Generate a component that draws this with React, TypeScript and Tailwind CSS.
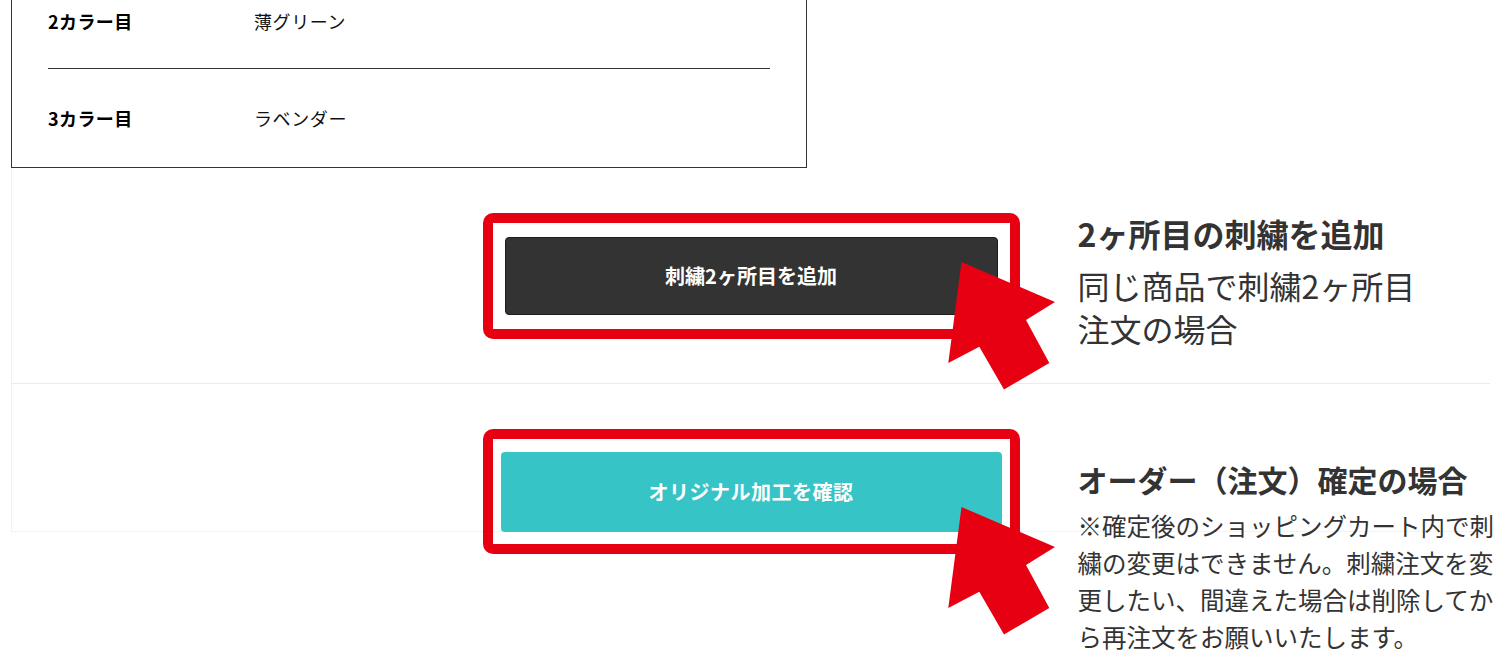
const jp = "font-['Noto_Sans_CJK_JP','Noto_Sans',sans-serif]"

const colorRows = [
    { label: '2カラー目', value: '薄グリーン' },
    { label: '3カラー目', value: 'ラベンダー' },
]

// red pointer arrow used on both annotations
const PointerArrow = ({ className }: { className: string }) => (
    <svg
        className={className}
        width="108"
        height="128"
        viewBox="0 0 108 128"
        aria-hidden="true"
    >
        <path
            d="M13.5 0 L107 40 L78 58 L101.3 101 L56 127.5 L31.3 84.7 L0.3 101 Z"
            fill="#e60012"
        />
    </svg>
)

const App = () => {
    return (
        <div className={`min-h-screen bg-white text-[#222] ${jp}`}>
            {/* Color table (top cut off) */}
            <div className="ml-[11px] w-[796px] border-x border-b border-[#333] px-[36px]">
                {colorRows.map((row, i) => (
                    <div
                        key={row.label}
                        className={
                            i === 0
                                ? 'flex h-[69px] items-start border-b border-[#333] pt-[8px]'
                                : 'flex h-[98px] items-center'
                        }
                    >
                        <p className="w-[206px] text-[18px] leading-[27px] font-bold tracking-[0.4px] text-black">
                            {row.label}
                        </p>
                        <p className="text-[18px] leading-[27px] tracking-[0.6px] text-[#111]">
                            {row.value}
                        </p>
                    </div>
                ))}
            </div>

            <div className="ml-[11px] w-[1479px] border-l border-[#f0f0f0]">
                {/* Add second embroidery */}
                <div className="relative grid h-[216px] grid-cols-[minmax(0,1fr)_493px_minmax(0,1fr)] border-b border-[#ebebeb]">
                    <div />
                    <div className="relative mt-[69px] h-[78px]">
                        <div className="absolute -top-[24px] -bottom-[24px] -left-[22px] -right-[22px] rounded-[10px] border-[10px] border-[#e60012]" />
                        <button className="relative flex h-full w-full items-center justify-center rounded-[4px] border border-[#1c1c1c] bg-[#333] text-[20px] font-bold text-white">
                            刺繍2ヶ所目を追加
                        </button>
                    </div>
                    <div className="pt-[44px] pl-[80px] text-[#333]">
                        <h3 className="w-[420px] text-[32px] leading-[42px] font-bold">
                            2ヶ所目の刺繍を追加
                        </h3>
                        <p className="mt-[10px] w-[420px] text-[32px] leading-[42.5px]">
                            同じ商品で刺繍2ヶ所目
                            <br />
                            注文の場合
                        </p>
                    </div>
                    <PointerArrow className="absolute left-[936px] top-[94px]" />
                </div>

                {/* Confirm order */}
                <div className="relative grid h-[148px] grid-cols-[minmax(0,1fr)_501px_minmax(0,1fr)] border-b border-[#f3f3f3]">
                    <div />
                    <div className="relative mt-[68px] h-[80px]">
                        <div className="absolute -top-[23px] -bottom-[22px] -left-[18px] -right-[18px] rounded-[10px] border-[10px] border-[#e60012]" />
                        <button className="relative flex h-full w-full items-center justify-center rounded-[4px] bg-[#37c4c6] text-[20px] font-bold tracking-[0.5px] text-white">
                            オリジナル加工を確認
                        </button>
                    </div>
                    <div className="pt-[75px] pl-[76px] text-[#333]">
                        <h3 className="w-[430px] text-[30px] leading-[40px] font-bold">
                            オーダー（注文）確定の場合
                        </h3>
                        <p className="mt-[8px] w-[430px] text-[24.5px] leading-[37px]">
                            ※確定後のショッピングカート内で刺
                            <br />
                            繍の変更はできません。刺繍注文を変
                            <br />
                            更したい、間違えた場合は削除してか
                            <br />
                            ら再注文をお願いいたします。
                        </p>
                    </div>
                    <PointerArrow className="absolute left-[936px] top-[123px]" />
                </div>
            </div>
        </div>
    )
}

export default App
